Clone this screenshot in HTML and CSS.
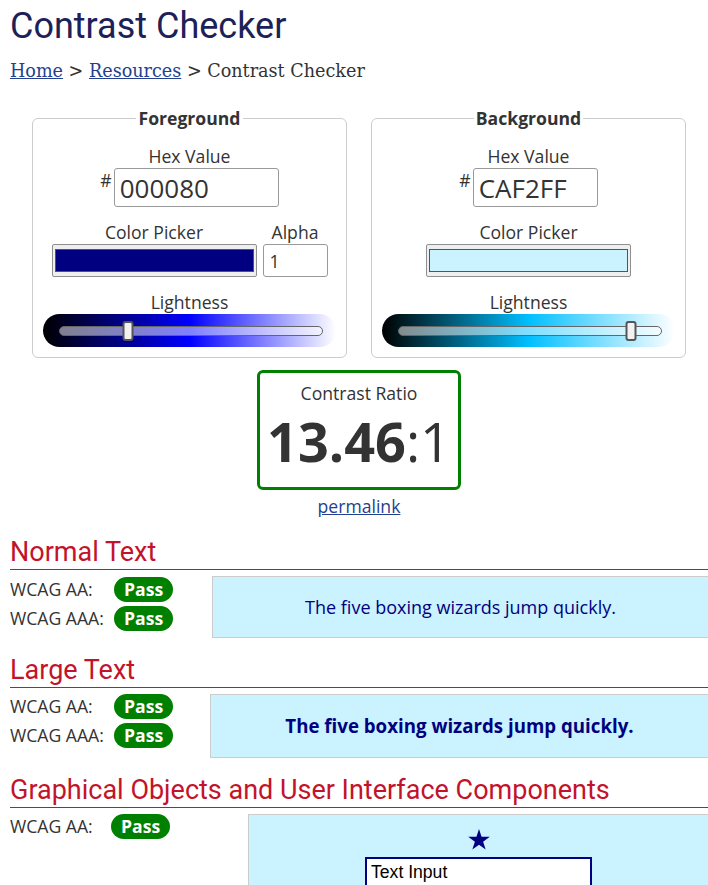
FILE: index.html
```html
<!DOCTYPE html>
<html lang="en">
<head>
<meta charset="utf-8">
<title>Contrast Checker</title>
<link rel="stylesheet" href="styles.css">
</head>
<body>
<main class="page">
  <h1 class="title">Contrast Checker</h1>
  <nav class="crumbs"><a href="#">Home</a> &gt; <a href="#">Resources</a> &gt; Contrast Checker</nav>

  <div class="pickers">
    <fieldset class="picker">
      <legend>Foreground</legend>
      <div class="field-label first">Hex Value</div>
      <div class="hex-row"><span class="hash">#</span><input class="hex-input hex-fg" type="text" value="000080"></div>
      <div class="swatch-row">
        <div class="col">
          <div class="field-label">Color Picker</div>
          <div class="swatch"><div class="swatch-fill fill-fg"></div></div>
        </div>
        <div class="col">
          <div class="field-label">Alpha</div>
          <input class="alpha" type="text" value="1">
        </div>
      </div>
      <div class="field-label">Lightness</div>
      <div class="slider slider-fg"><div class="track"><div class="thumb" style="left:26%"></div></div></div>
    </fieldset>

    <fieldset class="picker">
      <legend>Background</legend>
      <div class="field-label first">Hex Value</div>
      <div class="hex-row"><span class="hash">#</span><input class="hex-input hex-bg" type="text" value="CAF2FF"></div>
      <div class="swatch-row">
        <div class="col">
          <div class="field-label">Color Picker</div>
          <div class="swatch"><div class="swatch-fill fill-bg"></div></div>
        </div>
      </div>
      <div class="field-label">Lightness</div>
      <div class="slider slider-bg"><div class="track"><div class="thumb" style="left:88.6%"></div></div></div>
    </fieldset>
  </div>

  <div class="ratio-box">
    <div class="ratio-label">Contrast Ratio</div>
    <div class="ratio-value"><b>13.46</b>:1</div>
  </div>
  <div class="permalink-wrap"><a href="#" class="permalink">permalink</a></div>

  <section class="result first-section">
    <h2 class="section-title">Normal Text</h2>
    <div class="section-body">
      <div class="checks checks-normal">
        <span class="check-label">WCAG AA:</span><span class="badge">Pass</span>
        <span class="check-label">WCAG AAA:</span><span class="badge">Pass</span>
      </div>
      <div class="sample sample-normal">The five boxing wizards jump quickly.</div>
    </div>
  </section>

  <section class="result">
    <h2 class="section-title">Large Text</h2>
    <div class="section-body">
      <div class="checks checks-large">
        <span class="check-label">WCAG AA:</span><span class="badge">Pass</span>
        <span class="check-label">WCAG AAA:</span><span class="badge">Pass</span>
      </div>
      <div class="sample sample-large">The five boxing wizards jump quickly.</div>
    </div>
  </section>

  <section class="result">
    <h2 class="section-title">Graphical Objects and User Interface Components</h2>
    <div class="section-body">
      <div class="checks checks-ui">
        <span class="check-label">WCAG AA:</span><span class="badge">Pass</span>
      </div>
      <div class="sample sample-ui">
        <svg class="star" width="22" height="21" viewBox="0 0 24 23" aria-hidden="true"><polygon points="12,0 14.8,8.6 23.8,8.6 16.5,13.9 19.3,22.5 12,17.2 4.7,22.5 7.5,13.9 0.2,8.6 9.2,8.6" fill="#000080"/></svg>
        <div class="ui-input">Text Input</div>
      </div>
    </div>
  </section>
</main>
</body>
</html>
```
FILE: styles.css
```css
html, body { overflow-x: hidden; }
body {
  margin: 0;
  padding: 5px 0 0 10px;
  background: #fff;
  color: #333;
  font-family: "Open Sans", "Noto Sans", sans-serif;
  font-size: 17.6px;
}
.page { width: 698px; }

.title {
  margin: 0;
  font-family: Roboto, sans-serif;
  font-weight: 400;
  font-size: 36px;
  line-height: 42px;
  color: #1c2158;
}
.crumbs {
  margin-top: 13px;
  font-family: "DejaVu Serif", "Liberation Serif", serif;
  font-size: 17.6px;
  line-height: 22px;
  color: #333;
}
.crumbs a { color: #253f8f; }

.pickers {
  display: flex;
  gap: 24px;
  padding: 0 22px;
  margin-top: 24px;
}
.picker {
  flex: 1;
  box-sizing: border-box;
  min-width: 0;
  margin: 0;
  border: 1px solid #ccc;
  border-radius: 6px;
  padding: 14px 10px 10px;
}
.picker legend {
  margin: 0 auto;
  padding: 0 2px;
  font-weight: 700;
  line-height: 24px;
  color: #333;
}
.field-label {
  text-align: center;
  line-height: 24px;
  margin-top: 13px;
}
.field-label.first { margin-top: 0; }
.col .field-label { margin-top: 13px; }

.hex-row {
  display: flex;
  justify-content: center;
  align-items: flex-start;
}
.hash { line-height: 24px; margin-right: 2px; font-size: 17.6px; }
.hex-input {
  box-sizing: border-box;
  height: 39px;
  border: 1px solid #999;
  border-radius: 3px;
  padding: 0 5px;
  font-family: "Open Sans", sans-serif;
  font-size: 26px;
  color: #333;
  background: #fff;
}
.hex-fg { width: 165px; }
.hex-bg { width: 125px; }

.swatch-row {
  display: flex;
  justify-content: center;
  gap: 6px;
}
.col { display: flex; flex-direction: column; align-items: stretch; }
.swatch {
  box-sizing: border-box;
  width: 205px;
  height: 33px;
  border: 1px solid #8f8f8f;
  border-radius: 2px;
  background: #efefef;
  padding: 4px 2px;
}
.swatch-fill {
  box-sizing: border-box;
  height: 100%;
  border: 1px solid #555;
}
.fill-fg { background: #000080; }
.fill-bg { background: #caf2ff; }
.alpha {
  box-sizing: border-box;
  width: 65px;
  height: 33px;
  border: 1px solid #999;
  border-radius: 3px;
  padding: 0 6px;
  font-family: "Open Sans", sans-serif;
  font-size: 17.6px;
  color: #333;
}

.slider {
  box-sizing: border-box;
  height: 33px;
  margin: 0;
  padding: 0 13px 0 16px;
  border-radius: 17px;
  display: flex;
  align-items: center;
}
.slider-fg { background: linear-gradient(to right, #000, #0000ff, #fff); }
.slider-bg { background: linear-gradient(to right, #000, #00bfff, #fff); }
.track {
  position: relative;
  flex: 1;
  box-sizing: border-box;
  height: 10px;
  border: 1px solid #666;
  border-radius: 5px;
  background: rgba(255, 255, 255, 0.5);
}
.thumb {
  position: absolute;
  top: 50%;
  box-sizing: border-box;
  width: 11px;
  height: 20px;
  transform: translate(-50%, -50%);
  border: 2px solid #555;
  border-radius: 3px;
  background: #f2f2f2;
}

.ratio-box {
  box-sizing: border-box;
  width: 204px;
  margin: 12px auto 0;
  border: 3px solid #008000;
  border-radius: 6px;
  padding: 8px 0 19px;
  text-align: center;
}
.ratio-label { line-height: 24px; }
.ratio-value {
  margin-top: 9px;
  font-size: 54px;
  line-height: 54px;
  font-weight: 400;
}
.ratio-value b { font-weight: 700; }
.permalink-wrap {
  text-align: center;
  line-height: 24px;
  margin-top: 4px;
}
.permalink { color: #253f8f; }

.section-title {
  margin: 17px 0 6px;
  padding-bottom: 2px;
  border-bottom: 1px solid #d0102c;
  font-family: Roboto, sans-serif;
  font-weight: 400;
  font-size: 27px;
  line-height: 30px;
  color: #c3132b;
}
.first-section .section-title { margin-top: 19px; }
.section-body { display: flex; align-items: flex-start; }
.checks {
  display: grid;
  grid-template-columns: 104px auto;
  row-gap: 4px;
  align-items: center;
  justify-items: start;
  padding-top: 1px;
}
.checks-normal { width: 202px; }
.checks-large { width: 200px; padding-top: 0; }
.checks-ui { width: 238px; grid-template-columns: 101px auto; padding-top: 0; }
.check-label { line-height: 25px; }
.badge {
  display: inline-block;
  height: 25px;
  line-height: 25px;
  padding: 0 10px;
  border-radius: 13px;
  background: #008000;
  color: #fff;
  font-weight: 700;
}
.sample {
  flex: 1;
  margin-right: -1px;
  border: 1px solid #ccc;
  background: #caf2ff;
  color: #000080;
  text-align: center;
}
.sample-normal { padding: 18px 10px; line-height: 24px; font-size: 18px; }
.sample-large { padding: 18px 10px; line-height: 26px; font-size: 18.7px; font-weight: 700; }
.sample-ui {
  padding: 14px 0 20px;
  display: flex;
  flex-direction: column;
  align-items: center;
}
.star { display: block; }
.ui-input {
  box-sizing: border-box;
  width: 227px;
  margin-top: 7px;
  border: 2px solid #000080;
  background: #fff;
  padding: 0 4px;
  text-align: left;
  font-family: "Liberation Sans", Arial, sans-serif;
  font-size: 17.6px;
  line-height: 26px;
  color: #000;
}
```
